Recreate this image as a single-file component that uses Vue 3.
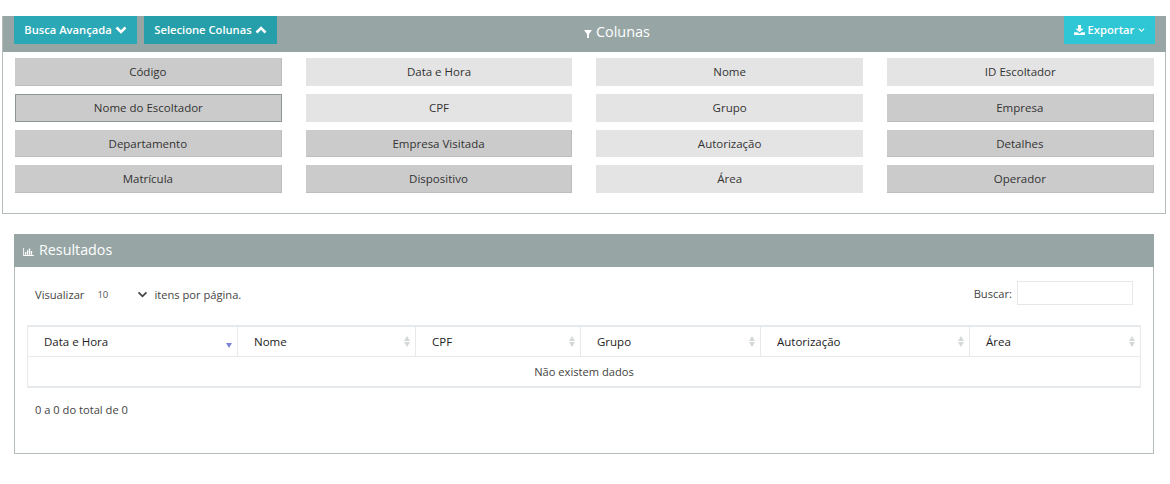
<script setup>
const cols = [
  { t: 'Código', on: 1 }, { t: 'Data e Hora' }, { t: 'Nome' }, { t: 'ID Escoltador' },
  { t: 'Nome do Escoltador', on: 1, focus: 1 }, { t: 'CPF' }, { t: 'Grupo' }, { t: 'Empresa', on: 1 },
  { t: 'Departamento', on: 1 }, { t: 'Empresa Visitada', on: 1 }, { t: 'Autorização' }, { t: 'Detalhes', on: 1 },
  { t: 'Matrícula', on: 1 }, { t: 'Dispositivo', on: 1 }, { t: 'Área' }, { t: 'Operador', on: 1 },
]
const heads = [
  { t: 'Data e Hora', w: 210, sorted: true },
  { t: 'Nome', w: 178 },
  { t: 'CPF', w: 165 },
  { t: 'Grupo', w: 180 },
  { t: 'Autorização', w: 209 },
  { t: 'Área', w: 170 },
]
</script>

<template>
  <div class="page">
    <section class="panel top">
      <header class="bar">
        <div class="left">
          <button class="btn b1">Busca Avançada
            <svg class="chev" viewBox="0 0 12 8"><path d="M1.500 1.500 6 6l4.500-4.500" /></svg>
          </button>
          <button class="btn b2">Selecione Colunas
            <svg class="chev" viewBox="0 0 12 8"><path d="M1.500 6.500 6 2l4.500 4.500" /></svg>
          </button>
        </div>
        <h2 class="title">
          <svg class="filter" viewBox="0 0 8 8"><path d="M0 0h8L5 4v4H3V4z" /></svg>
          Colunas
        </h2>
        <button class="btn export">
          <svg class="dl" viewBox="0 0 12 11"><path d="M4.300 0h3.400v4H10.500L6 8 1.500 4h2.800zM0 8h3.500L6 9.500 8.500 8H12v3H0z" /></svg>
          Exportar
          <svg class="mini" viewBox="0 0 8 6"><path d="M1 1.500 4 4.500l3-3" /></svg>
        </button>
      </header>
      <div class="grid">
        <div v-for="c in cols" :key="c.t" class="col" :class="{ on: c.on, focus: c.focus }">{{ c.t }}</div>
      </div>
    </section>

    <section class="panel results">
      <header class="rbar">
        <svg class="chart" viewBox="0 0 12 9"><path d="M0 0h1v8h11v1H0zM2 4.500h1.500V7.500H2zM4.200 2.500h1.500v5H4.200zM6.400 0.500h1.500v7H6.400zM8.600 3.500h1.500v4H8.600z" /></svg>
        Resultados
      </header>
      <div class="body">
        <div class="controls">
          <div class="length">
            <span>Visualizar</span>
            <span class="sel">10
              <svg class="sel-chev" viewBox="0 0 12 8"><path d="M1.500 1.500 6 6l4.500-4.500" /></svg>
            </span>
            <span>itens por página.</span>
          </div>
          <label class="search">Buscar:<input type="text" /></label>
        </div>
        <table>
          <thead>
            <tr>
              <th v-for="h in heads" :key="h.t" :style="{ width: h.w + 'px' }">
                {{ h.t }}
                <span v-if="h.sorted" class="down"></span>
                <span v-else class="sort"><i></i><b></b></span>
              </th>
            </tr>
          </thead>
          <tbody>
            <tr><td colspan="6">Não existem dados</td></tr>
          </tbody>
        </table>
        <div class="info">0 a 0 do total de 0</div>
      </div>
    </section>
  </div>
</template>

<style>
html, body { margin: 0; background: #fff; }
</style>

<style scoped>
.page {
  width: 1170px;
  height: 484px;
  padding-top: 16px;
  box-sizing: border-box;
  font-family: "Open Sans", sans-serif;
  color: #333;
  overflow: hidden;
}
.panel { box-sizing: border-box; background: #fff; border: 1px solid #b4bcbc; }
.top { margin-left: 2px; width: 1164px; height: 198px; border-top: 0; }
.bar {
  position: relative;
  height: 36px;
  background: #97a6a5;
  display: flex;
  justify-content: space-between;
  padding: 0 11px;
  margin: 0 -1px 0 0;
}
.left { display: flex; gap: 7px; }
.btn {
  height: 28px;
  border: 0;
  padding: 0;
  color: #fff;
  font: 600 11.200px/28px "Open Sans", sans-serif;
  display: flex;
  align-items: center;
  justify-content: center;
  gap: 3px;
}
.b1 { width: 123px; background: #2ba8b6; }
.b2 { width: 133px; background: #269faa; }
.chev { width: 12px; height: 8px; fill: none; stroke: #fff; stroke-width: 2.600; }
.title {
  position: absolute;
  left: 581px;
  top: 6px;
  margin: 0;
  color: #fff;
  font: 400 14.400px/20px "Open Sans", sans-serif;
  display: flex;
  align-items: center;
  gap: 4px;
}
.filter { width: 8px; height: 8px; fill: #fff; margin-top: 3px; }
.export { width: 91px; background: #2fc7d6; gap: 3px; }
.dl { width: 11px; height: 10px; fill: #fff; }
.mini { width: 7px; height: 6px; fill: none; stroke: #fff; stroke-width: 1.200; margin-left: 1px; }
.grid {
  display: grid;
  grid-template-columns: repeat(4, 266.670px);
  column-gap: 24px;
  row-gap: 8px;
  grid-auto-rows: 27.600px;
  padding: 6.400px 0 0 12px;
}
.col {
  background: #e4e4e4;
  font-size: 11.500px;
  text-align: center;
  line-height: 27px;
  color: #333;
  box-sizing: border-box;
}
.col.on {
  background: #cbcbcb;
  border-right: 1px solid #bdbdbd;
  border-bottom: 1px solid #bdbdbd;
}
.col.focus { border: 1px solid #8e9696; line-height: 25px; }

.results { margin: 20px 0 0 14px; width: 1140px; height: 220px; border-top: 0; }
.rbar {
  height: 33px;
  margin: 0 -1px;
  background: #97a6a5;
  color: #fff;
  font-size: 14.300px;
  line-height: 31px;
  display: flex;
  align-items: flex-start;
  padding-left: 9px;
  gap: 5px;
}
.chart { width: 11px; height: 8px; fill: #fff; margin-top: 14px; }
.body { padding: 0 12px; }
.controls {
  height: 58px;
  display: flex;
  justify-content: space-between;
  font-size: 11.150px;
  color: #444;
  align-items: flex-start;
}
.length { display: flex; align-items: center; padding: 19px 0 0 8px; line-height: 17px; }
.sel {
  width: 51px;
  margin-left: 13px;
  margin-right: 6px;
  font-size: 9.500px;
  color: #555;
  position: relative;
  display: block;
}
.sel-chev {
  position: absolute;
  right: 0;
  top: 5px;
  width: 11px;
  height: 7px;
  fill: none;
  stroke: #444;
  stroke-width: 2;
}
.search { display: flex; align-items: center; gap: 5px; padding: 14px 8px 0 0; }
.search input {
  width: 116px;
  height: 24px;
  box-sizing: border-box;
  border: 1px solid #e4e8ea;
  background: #fff;
  padding: 0;
}
table {
  width: 1112px;
  border-collapse: separate;
  border-spacing: 0;
  table-layout: fixed;
  border: 1px solid #e6eaec;
  border-top-width: 2px;
  border-bottom-width: 2px;
}
th {
  position: relative;
  height: 30px;
  padding: 0 0 0 16px;
  text-align: left;
  font-weight: 400;
  font-size: 11.500px;
  color: #222;
  border-bottom: 1px solid #e6eaec;
  border-right: 1px solid #e6eaec;
  box-sizing: border-box;
}
th:last-child { border-right: 0; }
td {
  height: 29px;
  padding: 0;
  text-align: center;
  font-size: 11.150px;
  color: #444;
}
.down {
  position: absolute;
  right: 5px;
  top: 16px;
  width: 0;
  height: 0;
  border-left: 3px solid transparent;
  border-right: 3px solid transparent;
  border-top: 5px solid #7f85d6;
}
.sort { position: absolute; right: 4px; top: 9px; width: 7px; height: 11px; }
.sort i, .sort b {
  position: absolute;
  left: 0;
  width: 0;
  height: 0;
  border-left: 3.500px solid transparent;
  border-right: 3.500px solid transparent;
}
.sort i { top: 0; border-bottom: 5px solid #d4d8d8; }
.sort b { bottom: 0; border-top: 5px solid #d4d8d8; }
.info { margin: 13px 0 0 8px; font-size: 11.150px; line-height: 17px; color: #444; }
</style>
